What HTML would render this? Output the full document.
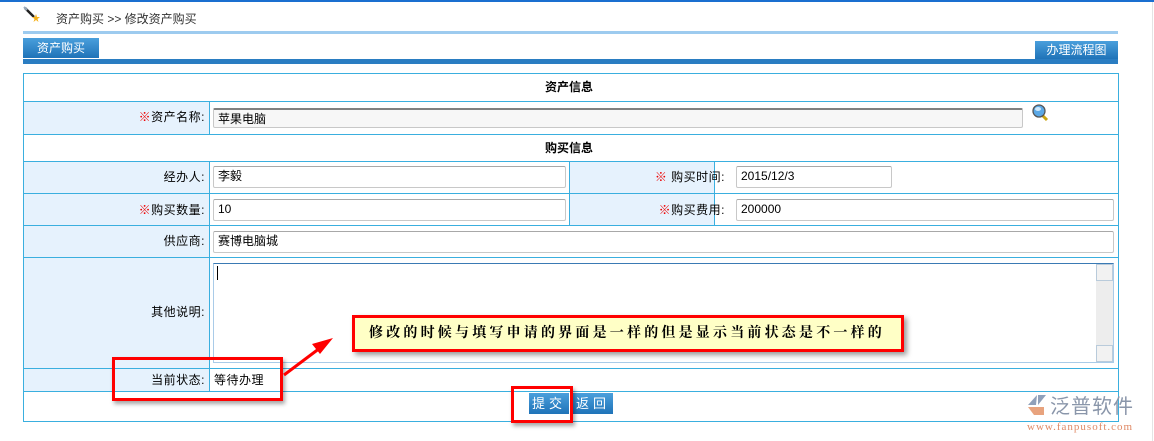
<!DOCTYPE html>
<html><head><meta charset="utf-8"><style>
*{margin:0;padding:0;box-sizing:border-box}
body{width:1154px;height:441px;background:#fff;position:relative;overflow:hidden;font-family:"Liberation Sans","Noto Sans CJK SC",sans-serif;font-size:12px;color:#000}
.a{position:absolute}
.hl{position:absolute;height:1px;background:#3aafdf}
.vl{position:absolute;width:1px;background:#3aafdf}
.lab{position:absolute;background:#e6f2fd}
.t{position:absolute;white-space:nowrap;line-height:14px}
.rl{position:absolute;white-space:nowrap;line-height:14px;text-align:right;letter-spacing:.5px}
.r{color:#e00}
.inp{position:absolute;border:1px solid #c8c8c8;border-top-color:#a8a8a8;border-radius:2px;background:#fff;padding-left:4px;line-height:18px;font-size:12px}
.btn{position:absolute;background:linear-gradient(#4a9fdc,#1f73b8);color:#fff;text-align:center;line-height:21px;font-size:13px;letter-spacing:4px}
</style></head><body>
<div class="a" style="left:0;top:0;width:1154px;height:2px;background:#1a6fd0"></div>
<div class="a" style="left:1152px;top:2px;width:1px;height:439px;background:#e4e4e4"></div>
<svg class="a" style="left:22px;top:5px" width="20" height="18"><line x1="3" y1="3" x2="12" y2="12" stroke="#222" stroke-width="2.5"/><line x1="2" y1="2" x2="5" y2="5" stroke="#9ab" stroke-width="2"/><polygon points="14,9 15,12 18,12 15.5,14 16.5,17 14,15 11.5,17 12.5,14 10,12 13,12" fill="#f7b21a"/></svg>
<div class="t" style="left:56px;top:12px;color:#333">资产购买 &gt;&gt; 修改资产购买</div>
<div class="a" style="left:23px;top:31px;width:1095px;height:3px;background:#9dcbef"></div>
<div class="btn" style="left:23px;top:38px;width:76px;height:20px;line-height:20px;font-size:12px;letter-spacing:0">资产购买</div>
<div class="btn" style="left:1035px;top:41px;width:83px;height:18px;line-height:18px;font-size:12px;letter-spacing:0">办理流程图</div>
<div class="a" style="left:23px;top:59px;width:1095px;height:5px;background:#2a7dc2"></div>

<div class="lab" style="left:24px;top:101px;width:185px;height:33px"></div>
<div class="lab" style="left:24px;top:161px;width:185px;height:230px"></div>
<div class="lab" style="left:570px;top:161px;width:145px;height:64px"></div>

<div class="hl" style="left:23px;top:73px;width:1096px"></div>
<div class="hl" style="left:23px;top:101px;width:1096px"></div>
<div class="hl" style="left:23px;top:134px;width:1096px"></div>
<div class="hl" style="left:23px;top:161px;width:1096px"></div>
<div class="hl" style="left:23px;top:193px;width:1096px"></div>
<div class="hl" style="left:23px;top:225px;width:1096px"></div>
<div class="hl" style="left:23px;top:257px;width:1096px"></div>
<div class="hl" style="left:23px;top:368px;width:1096px"></div>
<div class="hl" style="left:23px;top:391px;width:1096px"></div>
<div class="hl" style="left:23px;top:421px;width:1096px"></div>
<div class="vl" style="left:23px;top:73px;height:349px"></div>
<div class="vl" style="left:1118px;top:73px;height:349px"></div>
<div class="vl" style="left:209px;top:101px;height:33px"></div>
<div class="vl" style="left:209px;top:161px;height:230px"></div>
<div class="vl" style="left:569px;top:161px;height:64px"></div>
<div class="vl" style="left:714px;top:161px;height:64px"></div>

<div class="t" style="left:545px;top:80px;font-weight:bold">资产信息</div>
<div class="t" style="left:545px;top:141px;font-weight:bold">购买信息</div>
<div class="rl" style="right:949px;top:110px"><span class="r">※</span>资产名称:</div>
<div class="inp" style="left:213px;top:108px;width:810px;height:20px;background:#f7f7f7;border-top:2px solid #808080">苹果电脑</div>
<svg class="a" style="left:1031px;top:104px" width="20" height="20"><line x1="10" y1="10" x2="16" y2="16" stroke="#c9a512" stroke-width="3"/><circle cx="8" cy="7" r="6" fill="#5aa8e6" stroke="#555" stroke-width="1.3"/><ellipse cx="7" cy="5" rx="3" ry="2" fill="#cde8fb"/></svg>

<div class="rl" style="right:949px;top:170px">经办人:</div>
<div class="inp" style="left:213px;top:166px;width:353px;height:22px">李毅</div>
<div class="rl" style="right:429px;top:170px"><span class="r">※</span> 购买时间:</div>
<div class="inp" style="left:736px;top:166px;width:156px;height:22px">2015/12/3</div>

<div class="rl" style="right:949px;top:203px"><span class="r">※</span>购买数量:</div>
<div class="inp" style="left:213px;top:199px;width:353px;height:22px">10</div>
<div class="rl" style="right:429px;top:203px"><span class="r">※</span>购买费用:</div>
<div class="inp" style="left:736px;top:199px;width:378px;height:22px">200000</div>

<div class="rl" style="right:949px;top:234px">供应商:</div>
<div class="inp" style="left:213px;top:231px;width:901px;height:22px">赛博电脑城</div>

<div class="rl" style="right:949px;top:305px">其他说明:</div>
<div class="a" style="left:213px;top:263px;width:901px;height:100px;border:1px solid #a9cbe8;border-top-color:#3a7ab4"></div>
<div class="a" style="left:217px;top:266px;width:1px;height:14px;background:#000"></div>
<div class="a" style="left:1096px;top:264px;width:17px;height:98px;background:#ededed"></div>
<div class="a" style="left:1096px;top:264px;width:17px;height:17px;border:1px solid #b9cbdb;background:#f2f2f2"></div>
<div class="a" style="left:1096px;top:345px;width:17px;height:17px;border:1px solid #b9cbdb;background:#f2f2f2"></div>

<div class="rl" style="right:949px;top:373px">当前状态:</div>
<div class="t" style="left:214px;top:373px;letter-spacing:.5px">等待办理</div>

<div class="btn" style="left:529px;top:393px;width:40px;height:21px">提交</div>
<div class="btn" style="left:573px;top:393px;width:40px;height:21px">返回</div>

<div class="a" style="left:112px;top:357px;width:171px;height:44px;border:3px solid #f00;box-shadow:2px 3px 4px rgba(0,0,0,.35)"></div>
<div class="a" style="left:511px;top:386px;width:62px;height:37px;border:3px solid #f00;box-shadow:2px 3px 4px rgba(0,0,0,.35)"></div>
<div class="a" style="left:352px;top:315px;width:552px;height:37px;border:3px solid #f00;background:#ffffc6;box-shadow:3px 3px 5px rgba(0,0,0,.4);font-weight:bold;font-size:14px;line-height:31px;padding-left:14px;letter-spacing:3.2px;font-family:'Liberation Serif','Noto Serif CJK SC',serif">修改的时候与填写申请的界面是一样的但是显示当前状态是不一样的</div>
<svg class="a" style="left:280px;top:332px" width="60" height="48"><line x1="4" y1="43" x2="40" y2="16" stroke="#f00" stroke-width="3"/><polygon points="53,6 32,12 40,22" fill="#f00"/></svg>

<svg class="a" style="left:1024px;top:393px" width="24" height="26"><path d="M13 2 L4 12 L12 12 Z" fill="#8fa0ba"/><path d="M4 14 L10 22 L20 22 L20 14 Z" fill="#e8a37e"/><path d="M14 2 L22 2 L14 12 Z" fill="#8fa0ba"/></svg>
<div class="t" style="left:1050px;top:396px;font-size:20px;line-height:22px;color:#8a96aa;letter-spacing:1px">泛普软件</div>
<div class="t" style="left:1027px;top:420px;font-size:11px;color:#e08a66;font-family:'Liberation Serif',serif;letter-spacing:1px">www.fanpusoft.com</div>
</body></html>
